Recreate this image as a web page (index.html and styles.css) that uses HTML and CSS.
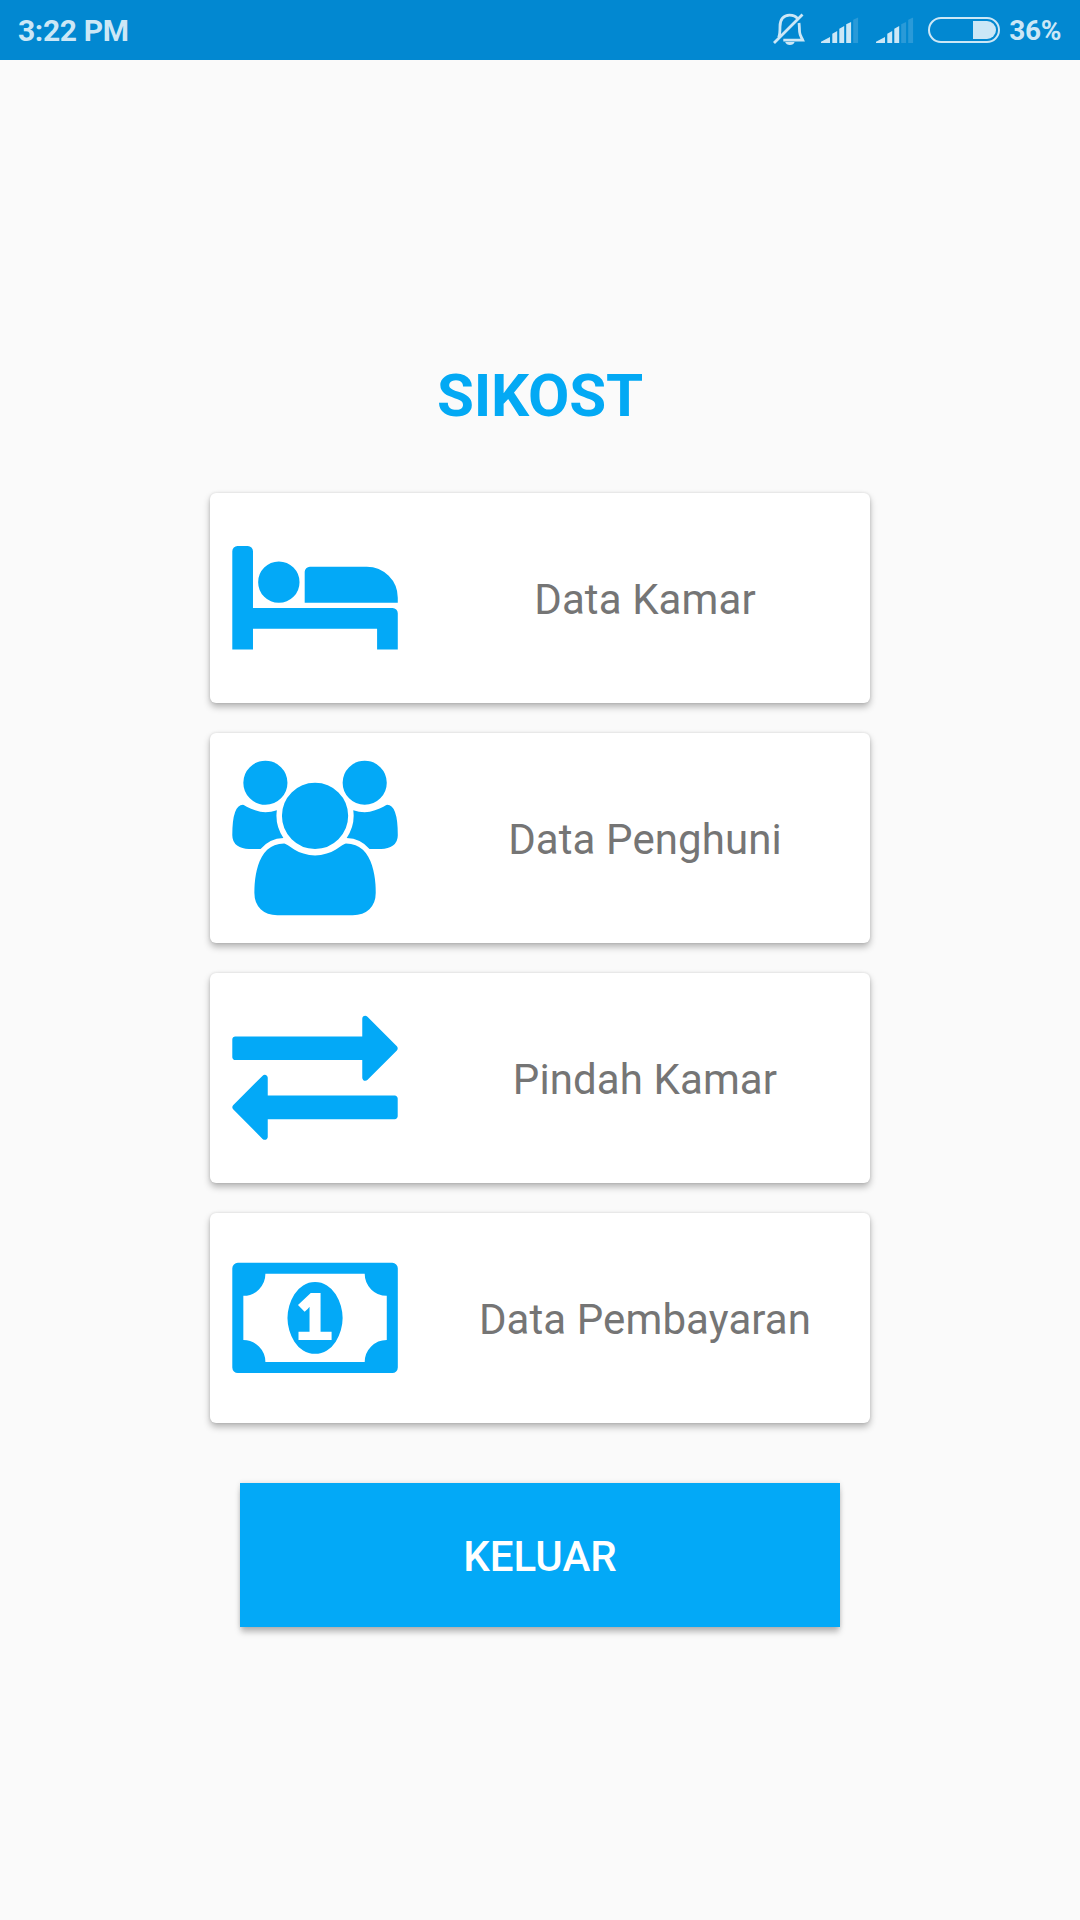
FILE: index.html
```html
<!DOCTYPE html>
<html lang="id">
<head>
<meta charset="utf-8">
<title>SIKOST</title>
<link rel="stylesheet" href="styles.css">
</head>
<body>
<header class="status-bar">
  <span class="clock">3:22 PM</span>
  <div class="status-icons">
    <svg class="bell" viewBox="0 0 32 60" fill="none" stroke="currentColor" stroke-width="2.800">
      <path d="M1 43 29.500 14.500M5.600 37.500C7 35 7 32 7 26.500 7 19.500 10.500 15.200 16.500 15.200c3.700 0 6.500 1.300 8.200 3.600M26 23c.4 2 .3 5 .6 9 .2 3.500 2 5.500 3.200 8.200H10.300"/>
      <path d="M12.200 42h9.400c-.6 1.900-2.300 3-4.700 3s-4.100-1.100-4.700-3z" fill="currentColor" stroke="none"/>
    </svg>
    <svg class="signal" viewBox="0 0 38 60" fill="currentColor">
      <path d="M0 43v-1.200L9 37v6zM11.300 43V33.800l4.900-2.800v12zM18.300 43V28.800l4.900-2.800v17zM25.200 43V24.300l4.900-2.300v21z"/>
      <path class="faded" d="M32.200 43V19.800l4.900-2.300V43z"/>
    </svg>
    <svg class="signal" viewBox="0 0 38 60" fill="currentColor">
      <path d="M0 43v-1.200L9 37v6zM11.300 43V33.800l4.900-2.800v12zM18.300 43V28.800l4.900-2.800v17z"/>
      <path class="faded" d="M25.200 43V24.300l4.900-2.300v21zM32.200 43V19.800l4.900-2.300V43z"/>
    </svg>
    <svg class="battery" viewBox="0 0 72 60">
      <rect x="1" y="18" width="70" height="24" rx="12" fill="none" stroke="currentColor" stroke-width="2"/>
      <path d="M45 21h14a9 9 0 0 1 0 18H45z" fill="currentColor"/>
    </svg>
    <span class="percent">36%</span>
  </div>
</header>
<main class="screen">
  <h1 class="title">SIKOST</h1>
  <nav class="menu">
    <a class="card">
      <svg class="card-icon" viewBox="0 0 210 210"><path transform="translate(22.300 32.300) scale(.0808)" d="M256 1024h1728q26 0 45 19t19 45v448h-256v-256H256v256H0V320q0-26 19-45t45-19h128q26 0 45 19t19 45v704zm576-320q0-106-75-181t-181-75-181 75-75 181 75 181 181 75 181-75 75-181zm1216 256v-64q0-159-112.500-271.500T1664 512H960q-26 0-45 19t-19 45v384h1152z"/></svg>
      <span class="card-label">Data Kamar</span>
    </a>
    <a class="card">
      <svg class="card-icon" viewBox="0 0 210 210"><path transform="translate(22.300 27.700) scale(.0862)" d="M593 896q-162 5-265 128H194q-82 0-138-40.500T0 865q0-353 124-353 6 0 43.500 21t97.500 42.500T384 597q67 0 133-23-5 37-5 66 0 139 81 256zm1071 637q0 120-73 189.500t-194 69.500H523q-121 0-194-69.500T256 1533q0-53 3.500-103.500t14-109T300 1212t43-97.500 62-81 85.500-53.500T602 960q10 0 43 21.500t73 48 107 48 135 21.500 135-21.500 107-48 73-48 43-21.500q61 0 111.500 20t85.500 53.500 62 81 43 97.500 26.500 108.500 14 109 3.500 103.500zM640 256q0 106-75 181t-181 75-181-75-75-181 75-181T384 0t181 75 75 181zm704 384q0 159-112.500 271.500T960 1024 688.500 911.500 576 640t112.500-271.500T960 256t271.500 112.500T1344 640zm576 225q0 78-56 118.500t-138 40.500h-134q-103-123-265-128 81-117 81-256 0-29-5-66 66 23 133 23 59 0 119-21.500t97.500-42.500 43.500-21q124 0 124 353zm-128-609q0 106-75 181t-181 75-181-75-75-181 75-181 181-75 181 75 75 181z"/></svg>
      <span class="card-label">Data Penghuni</span>
    </a>
    <a class="card">
      <svg class="card-icon" viewBox="0 0 210 210"><path transform="translate(22.300 16.200) scale(.0923)" d="M1792 1184v192q0 13-9.500 22.500t-22.500 9.500H384v192q0 13-9.500 22.500T352 1632q-12 0-24-10L9 1302q-9-9-9-22 0-14 9-23l320-320q9-9 23-9 13 0 22.500 9.500T384 960v192h1376q13 0 22.500 9.500t9.500 22.500zm0-544q0 14-9 23l-320 320q-9 9-23 9-13 0-22.500-9.500T1408 960V768H32q-13 0-22.500-9.500T0 736V544q0-13 9.500-22.500T32 512h1376V320q0-14 9-23t23-9q12 0 24 10l319 319q9 9 9 23z"/></svg>
      <span class="card-label">Pindah Kamar</span>
    </a>
    <a class="card">
      <svg class="card-icon" viewBox="0 0 210 210"><path transform="translate(22.300 27.700) scale(.0862)" d="M768 1152h384v-96h-128V608h-114L762 745l77 80q42-37 55-57h2v288H768v96zm512-256q0 70-21 142t-59.500 134-101.500 101-138 39-138-39-101.500-101-59.500-134-21-142 21-142 59.500-134T822 519t138-39 138 39 101.500 101 59.500 134 21 142zm512 256V640q-106 0-181-75t-75-181H384q0 106-75 181t-181 75v512q106 0 181 75t75 181h1152q0-106 75-181t181-75zm128-832v1152q0 26-19 45t-45 19H64q-26 0-45-19t-19-45V320q0-26 19-45t45-19h1792q26 0 45 19t19 45z"/></svg>
      <span class="card-label">Data Pembayaran</span>
    </a>
  </nav>
  <button class="logout" type="button">KELUAR</button>
</main>
</body>
</html>
```
FILE: styles.css
```css
* {
  box-sizing: border-box;
}

body {
  margin: 0;
  height: 1920px;
  display: flex;
  flex-direction: column;
  background: #fafafa;
  font-family: Roboto, "Liberation Sans", sans-serif;
}

.status-bar {
  height: 60px;
  display: flex;
  align-items: center;
  justify-content: space-between;
  padding: 0 19px 0 18px;
  background: #0288d1;
  color: #cce7f6;
  font-weight: 700;
}

.clock {
  padding-top: 2px;
  font-size: 30px;
  line-height: 58px;
  letter-spacing: -0.35px;
}

.status-icons {
  display: flex;
  align-items: center;
}

.status-icons svg {
  height: 60px;
  flex: none;
}

.bell {
  width: 32px;
  margin-right: 16px;
}

.signal {
  width: 38px;
  margin-right: 17px;
}

.signal + .battery {
  margin-left: -3px;
}

.faded {
  opacity: 0.2;
}

.battery {
  width: 72px;
  margin-right: 9px;
}

.percent {
  padding-top: 2px;
  font-size: 28px;
  line-height: 58px;
  letter-spacing: -0.35px;
}

.screen {
  flex: 1;
  display: flex;
  flex-direction: column;
  align-items: center;
  padding-top: 301px;
}

.title {
  margin: 0 0 62px;
  font-size: 60px;
  font-weight: 700;
  line-height: 70px;
  letter-spacing: -0.2px;
  color: #03a9f4;
}

.menu {
  width: 660px;
  display: flex;
  flex-direction: column;
  gap: 30px;
}

.card {
  height: 210px;
  display: flex;
  align-items: center;
  border-radius: 6px;
  background: #fff;
  box-shadow: 0 4px 7px rgba(0, 0, 0, 0.28), 0 0 3px rgba(0, 0, 0, 0.12);
}

.card-icon {
  width: 210px;
  height: 210px;
  flex: none;
  fill: #03a9f7;
}

.card-label {
  flex: 1;
  padding-top: 3px;
  text-align: center;
  font-size: 42px;
  line-height: 50px;
  letter-spacing: 0.1px;
  color: #757575;
}

.logout {
  width: 600px;
  height: 144px;
  margin-top: 60px;
  padding: 2px 0 0;
  border: 0;
  background: #03a9f7;
  box-shadow: 0 6px 6px -1px rgba(0, 0, 0, 0.26), 0 0 5px rgba(0, 0, 0, 0.12);
  color: #fff;
  font-family: inherit;
  font-size: 42px;
  font-weight: 500;
}
```
